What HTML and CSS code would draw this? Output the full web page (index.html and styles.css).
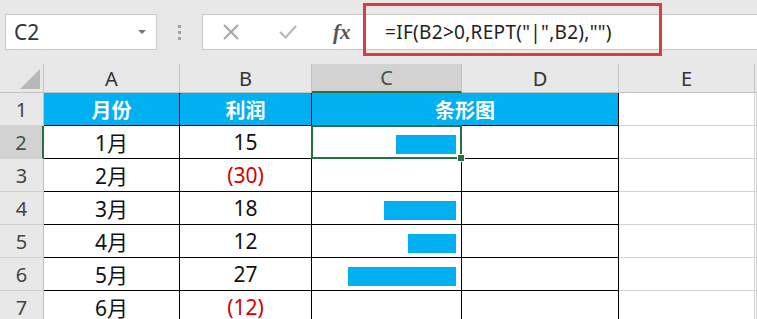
FILE: index.html
```html
<!DOCTYPE html>
<html lang="zh-CN">
<head>
  <meta charset="UTF-8" />
  <title>条形图</title>
  <link rel="stylesheet" href="styles.css">
</head>
<body>
  <div class="toolbar">
    <div class="namebox">
      <span>C2</span>
      <span class="arrow"></span>
    </div>
    <div class="grip"><i></i><i></i><i></i></div>
    <div class="formula">
      <div class="buttons">
        <svg class="btn-icon" width="18" height="18" viewBox="0 0 18 18">
          <path d="M2 2 L16 16 M16 2 L2 16" stroke="#a6a6a6" stroke-width="2" fill="none"/>
        </svg>
        <svg class="btn-icon" width="20" height="16" viewBox="0 0 20 16">
          <path d="M2 8 L7.5 13.5 L18 2" stroke="#b8b8b8" stroke-width="2.2" fill="none"/>
        </svg>
        <span class="fx">fx</span>
      </div>
      <div class="input">
        <span>=IF(B2&gt;0,REPT("|",B2),"")</span>
        <div class="callout"></div>
      </div>
    </div>
  </div>

  <div class="sheet">
    <!-- column headers -->
    <div class="corner"><span class="tri"></span></div>
    <div class="colhead">A</div>
    <div class="colhead">B</div>
    <div class="colhead active">C</div>
    <div class="colhead">D</div>
    <div class="colhead">E</div>
    <div class="colhead last"></div>

    <!-- row 1 -->
    <div class="rowhead">1</div>
    <div class="cell title">月份</div>
    <div class="cell title">利润</div>
    <div class="cell title span2">条形图</div>
    <div class="cell plain"></div>
    <div class="cell plain"></div>

    <!-- row 2 -->
    <div class="rowhead active">2</div>
    <div class="cell">1月</div>
    <div class="cell">15</div>
    <div class="cell bars selected"><div class="bar" style="width:60px"></div></div>
    <div class="cell"></div>
    <div class="cell plain"></div>
    <div class="cell plain"></div>

    <!-- row 3 -->
    <div class="rowhead">3</div>
    <div class="cell">2月</div>
    <div class="cell neg">(30)</div>
    <div class="cell bars"></div>
    <div class="cell"></div>
    <div class="cell plain"></div>
    <div class="cell plain"></div>

    <!-- row 4 -->
    <div class="rowhead">4</div>
    <div class="cell">3月</div>
    <div class="cell">18</div>
    <div class="cell bars"><div class="bar" style="width:72px"></div></div>
    <div class="cell"></div>
    <div class="cell plain"></div>
    <div class="cell plain"></div>

    <!-- row 5 -->
    <div class="rowhead">5</div>
    <div class="cell">4月</div>
    <div class="cell">12</div>
    <div class="cell bars"><div class="bar" style="width:48px"></div></div>
    <div class="cell"></div>
    <div class="cell plain"></div>
    <div class="cell plain"></div>

    <!-- row 6 -->
    <div class="rowhead">6</div>
    <div class="cell">5月</div>
    <div class="cell">27</div>
    <div class="cell bars"><div class="bar" style="width:108px"></div></div>
    <div class="cell"></div>
    <div class="cell plain"></div>
    <div class="cell plain"></div>

    <!-- row 7 -->
    <div class="rowhead">7</div>
    <div class="cell">6月</div>
    <div class="cell neg">(12)</div>
    <div class="cell bars"></div>
    <div class="cell"></div>
    <div class="cell plain"></div>
    <div class="cell plain"></div>
  </div>
</body>
</html>
```

FILE: styles.css
```css
body {
  margin: 0;
  width: 757px;
  height: 319px;
  overflow: hidden;
  background-color: #ffffff;
  font-family: "Noto Sans", "Noto Sans CJK SC", sans-serif;
  color: #111;
}

/* formula bar */
.toolbar {
  display: flex;
  align-items: flex-start;
  height: 64px;
  padding: 14px 0 0 5px;
  box-sizing: border-box;
  background-color: #e8e8e8;
}
.namebox {
  display: flex;
  align-items: center;
  justify-content: space-between;
  width: 152px;
  height: 36px;
  box-sizing: border-box;
  padding: 0 10px 0 8px;
  background-color: #fff;
  border: 1px solid #c9c9c9;
  font-size: 21px;
  color: #333;
}
.arrow {
  width: 0;
  height: 0;
  border-left: 4px solid transparent;
  border-right: 4px solid transparent;
  border-top: 4px solid #777;
}
.grip {
  display: flex;
  flex-direction: column;
  align-items: center;
  gap: 3px;
  width: 45px;
  padding-top: 11px;
}
.grip i {
  width: 3px;
  height: 3px;
  background-color: #a0a0a0;
}
.formula {
  display: flex;
  flex: 1;
  height: 36px;
  box-sizing: border-box;
  background-color: #fff;
  border: 1px solid #c9c9c9;
  border-right: none;
}
.buttons {
  display: flex;
  align-items: center;
  width: 160px;
  padding-left: 19px;
  box-sizing: border-box;
}
.btn-icon {
  margin-right: 38px;
}
.fx {
  font-family: "Liberation Serif", serif;
  font-style: italic;
  font-weight: bold;
  font-size: 21px;
  color: #555;
  margin-left: -3px;
}
.input {
  position: relative;
  display: flex;
  align-items: center;
  flex: 1;
  padding-left: 22px;
  font-size: 19px;
  letter-spacing: 0.3px;
  color: #222;
}
.callout {
  position: absolute;
  left: 0;
  top: -12px;
  width: 299px;
  height: 53px;
  box-sizing: border-box;
  border: 3px solid #dc3b3f;
}

/* grid */
.sheet {
  display: grid;
  grid-template-columns: 44px 136px 132px 150px 157px 136px 1fr;
  grid-template-rows: 29px;
  grid-auto-rows: 33px;
}
.corner,
.colhead {
  background-color: #e8e8e8;
  border-right: 1px solid #c2c2c2;
  border-bottom: 1px solid #c2c2c2;
  box-sizing: border-box;
}
.corner {
  position: relative;
}
.tri {
  position: absolute;
  right: 3px;
  bottom: 3px;
  width: 0;
  height: 0;
  border-left: 20px solid transparent;
  border-bottom: 20px solid #b7b7b7;
}
.colhead {
  display: flex;
  align-items: center;
  justify-content: center;
  font-size: 20px;
  color: #333;
}
.colhead.active {
  background-color: #d2d2d2;
  border-bottom: 2px solid #217346;
  color: #3d5447;
}
.colhead.last {
  border-right: none;
}
.rowhead {
  display: flex;
  align-items: center;
  justify-content: center;
  background-color: #e8e8e8;
  border-right: 1px solid #c2c2c2;
  border-bottom: 1px solid #d0d0d0;
  box-sizing: border-box;
  font-size: 20px;
  color: #444;
}
.rowhead.active {
  background-color: #d2d2d2;
  border-right: 2px solid #217346;
  color: #3d5447;
}
.cell {
  display: flex;
  align-items: center;
  justify-content: center;
  border-right: 1px solid #000;
  border-bottom: 1px solid #000;
  box-sizing: border-box;
  font-size: 21px;
}
.cell.plain {
  border-right: 1px solid #d4d4d4;
  border-bottom: 1px solid #d4d4d4;
}
.cell.title {
  background-color: #00b0f0;
  color: #fff;
  font-weight: bold;
  font-size: 20px;
}
.span2 {
  grid-column: span 2;
}
.neg {
  color: #d40000;
}
.bars {
  justify-content: flex-end;
  align-items: flex-start;
  padding: 9px 5px 0 0;
}
.bar {
  height: 19px;
  background-color: #00b0f0;
}
.selected {
  position: relative;
}
.selected::after {
  content: "";
  position: absolute;
  left: -1px;
  top: -1px;
  right: -1px;
  bottom: -1px;
  border: 2px solid #217346;
}
.selected::before {
  content: "";
  position: absolute;
  right: -4px;
  bottom: -4px;
  width: 6px;
  height: 6px;
  background-color: #217346;
  border: 1px solid #fff;
  z-index: 1;
}
```
